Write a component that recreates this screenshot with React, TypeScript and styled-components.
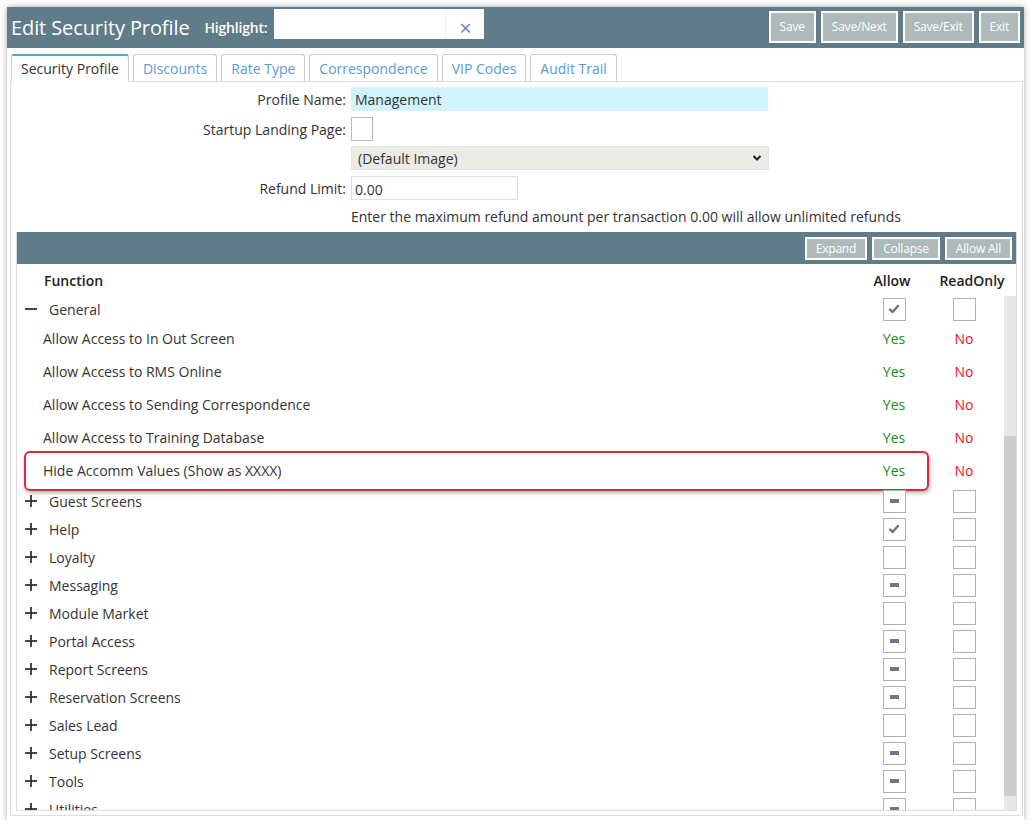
import React from 'react';
import styled, { createGlobalStyle } from 'styled-components';

const GlobalStyle = createGlobalStyle`
  html, body {
    margin: 0;
    padding: 0;
    background: #fff;
    font-family: 'Open Sans', 'Noto Sans', sans-serif;
    font-size: 14px;
    color: #333;
  }
  * { box-sizing: border-box; }
`;

type CheckState = 'check' | 'dash' | 'empty';

type SubRow = { label: string; highlight?: boolean };
type GroupRow = { label: string; allow: CheckState; readOnly: CheckState };

const subRows: SubRow[] = [
  { label: 'Allow Access to In Out Screen' },
  { label: 'Allow Access to RMS Online' },
  { label: 'Allow Access to Sending Correspondence' },
  { label: 'Allow Access to Training Database' },
  { label: 'Hide Accomm Values (Show as XXXX)', highlight: true }
];

const groups: GroupRow[] = [
  { label: 'Guest Screens', allow: 'dash', readOnly: 'empty' },
  { label: 'Help', allow: 'check', readOnly: 'empty' },
  { label: 'Loyalty', allow: 'empty', readOnly: 'empty' },
  { label: 'Messaging', allow: 'dash', readOnly: 'empty' },
  { label: 'Module Market', allow: 'empty', readOnly: 'empty' },
  { label: 'Portal Access', allow: 'dash', readOnly: 'empty' },
  { label: 'Report Screens', allow: 'dash', readOnly: 'empty' },
  { label: 'Reservation Screens', allow: 'dash', readOnly: 'empty' },
  { label: 'Sales Lead', allow: 'empty', readOnly: 'empty' },
  { label: 'Setup Screens', allow: 'dash', readOnly: 'empty' },
  { label: 'Tools', allow: 'dash', readOnly: 'empty' },
  { label: 'Utilities', allow: 'dash', readOnly: 'empty' }
];

const tabs = ['Security Profile', 'Discounts', 'Rate Type', 'Correspondence', 'VIP Codes', 'Audit Trail'];

function Box({ state }: { state: CheckState }) {
  return (
    <CheckBox>
      {state === 'check' && (
        <svg width="12" height="12" viewBox="0 0 12 12">
          <path d="M2 6.5 L4.6 9 L10 3" fill="none" stroke="#6b6e88" strokeWidth="2.4" strokeLinecap="round" strokeLinejoin="round" />
        </svg>
      )}
      {state === 'dash' && <Dash />}
    </CheckBox>
  );
}

function Toggle({ open }: { open: boolean }) {
  return (
    <ToggleIcon width="12" height="12" viewBox="0 0 12 12">
      <line x1="0" y1="6" x2="12" y2="6" stroke="#333" strokeWidth="1.8" />
      {!open && <line x1="6" y1="0" x2="6" y2="12" stroke="#333" strokeWidth="1.8" />}
    </ToggleIcon>
  );
}

export default function App() {
  return (
    <>
      <GlobalStyle />
      <Window>
        <TopBar>
          <Title>Edit Security Profile</Title>
          <HighlightLabel>Highlight:</HighlightLabel>
          <HighlightBox>
            <HighlightInput />
            <ClearX>×</ClearX>
          </HighlightBox>
          <Spacer />
          <BarButton>Save</BarButton>
          <BarButton>Save/Next</BarButton>
          <BarButton>Save/Exit</BarButton>
          <BarButton>Exit</BarButton>
        </TopBar>

        <TabStrip>
          {tabs.map((t, i) => (
            <Tab key={t} active={i === 0}>{t}</Tab>
          ))}
        </TabStrip>

        <Panel>
          <Form>
            <Label>Profile Name:</Label>
            <NameInput>Management</NameInput>
            <Label>Startup Landing Page:</Label>
            <div><EmptyCheck /></div>
            <span />
            <Select>
              <span>(Default Image)</span>
              <svg width="10" height="8" viewBox="0 0 10 8">
                <path d="M1.5 2 L5 5.5 L8.5 2" fill="none" stroke="#222" strokeWidth="2" />
              </svg>
            </Select>
            <Label>Refund Limit:</Label>
            <RefundInput>0.00</RefundInput>
            <span />
            <Help>Enter the maximum refund amount per transaction 0.00 will allow unlimited refunds</Help>
          </Form>

          <Table>
            <TableBar>
              <SmallButton>Expand</SmallButton>
              <SmallButton>Collapse</SmallButton>
              <SmallButton>Allow All</SmallButton>
            </TableBar>
            <HeadRow>
              <span>Function</span>
              <HeadCell>Allow</HeadCell>
              <HeadCell>ReadOnly</HeadCell>
            </HeadRow>
            <BodyWrap>
              <Body>
                <GroupLine compact>
                  <GroupName><Toggle open />General</GroupName>
                  <Cell><Box state="check" /></Cell>
                  <Cell><Box state="empty" /></Cell>
                </GroupLine>
                {subRows.map((r) => (
                  <SubLine key={r.label} highlight={r.highlight}>
                    <span>{r.label}</span>
                    <Cell><Yes>Yes</Yes></Cell>
                    <Cell><No>No</No></Cell>
                  </SubLine>
                ))}
                {groups.map((g) => (
                  <GroupLine key={g.label}>
                    <GroupName><Toggle open={false} />{g.label}</GroupName>
                    <Cell><Box state={g.allow} /></Cell>
                    <Cell><Box state={g.readOnly} /></Cell>
                  </GroupLine>
                ))}
              </Body>
              <Track>
                <Thumb />
              </Track>
            </BodyWrap>
          </Table>
        </Panel>
      </Window>
    </>
  );
}

const Window = styled.div`
  margin: 7px 0 0 7px;
  width: 1017px;
  height: 813px;
  background: #fff;
  box-shadow: 0 0 6px rgba(0, 0, 0, 0.35);
  display: flex;
  flex-direction: column;
`;

const TopBar = styled.div`
  height: 41px;
  background: #607c88;
  display: flex;
  align-items: center;
  padding: 0 4px 0 4px;
  gap: 5px;
`;

const Title = styled.div`
  color: #fff;
  font-size: 20px;
  margin-right: 10px;
  letter-spacing: -0.1px;
`;

const HighlightLabel = styled.div`
  color: #fff;
  font-size: 14px;
  font-weight: 600;
  letter-spacing: -0.2px;
  margin-right: 2px;
`;

const HighlightBox = styled.div`
  width: 210px;
  height: 30px;
  background: #fff;
  display: flex;
  align-items: center;
  margin-top: -7px;
`;

const HighlightInput = styled.div`
  flex: 1;
  height: 100%;
  border-right: 1px solid #eee;
`;

const ClearX = styled.span`
  width: 38px;
  text-align: center;
  color: #7186b8;
  font-size: 22px;
  line-height: 1;
  padding-top: 6px;
`;

const Spacer = styled.div`
  flex: 1;
`;

const BarButton = styled.div`
  height: 32px;
  padding: 0 9px;
  background: #aebaba;
  border: 2px solid #fff;
  color: #fff;
  font-size: 12px;
  display: flex;
  align-items: center;
  letter-spacing: -0.2px;
  margin-top: -2px;
`;

const TabStrip = styled.div`
  display: flex;
  gap: 4px;
  padding: 6px 0 0 4px;
  margin-bottom: -1px;
  position: relative;
  z-index: 1;
`;

const Tab = styled.div<{ active?: boolean }>`
  height: 28px;
  padding: 0 9px;
  display: flex;
  align-items: center;
  border: 1px solid #ccc;
  border-bottom: ${(p) => (p.active ? '1px solid #fff' : '1px solid #ddd')};
  border-top: ${(p) => (p.active ? '2px solid #42b4c4' : '1px solid #ccc')};
  border-radius: 3px 3px 0 0;
  background: #fff;
  color: ${(p) => (p.active ? '#333' : '#5b9bd6')};
  font-size: 14px;
`;

const Panel = styled.div`
  margin: 0 1px 4px 3px;
  flex: 1;
  border: 1px solid #ddd;
  display: flex;
  flex-direction: column;
  padding: 5px 5px 4px 5px;
  min-height: 0;
`;

const Form = styled.div`
  display: grid;
  grid-template-columns: 330px 1fr;
  column-gap: 5px;
  row-gap: 6px;
  align-items: center;
`;

const Label = styled.div`
  text-align: right;
  font-size: 14px;
  color: #333;
`;

const FieldText = styled.div`
  height: 24px;
  display: flex;
  align-items: center;
  padding: 0 3px;
  font-size: 14px;
  color: #333;
`;

const NameInput = styled(FieldText)`
  width: 417px;
  background: #cff4fa;
  border: 1px solid #e2eef0;
`;

const EmptyCheck = styled.div`
  width: 22px;
  height: 24px;
  border: 1px solid #b5bcbc;
`;

const Select = styled(FieldText)`
  width: 418px;
  background: #ebeae5;
  border: 1px solid #e4e3de;
  justify-content: space-between;
  padding: 0 6px 0 6px;
  margin-top: -1px;
`;

const RefundInput = styled(FieldText)`
  width: 167px;
  border: 1px solid #ddd;
  padding-top: 2px;
`;

const Help = styled.div`
  font-size: 14px;
  color: #333;
  margin-top: 1px;
`;

const Table = styled.div`
  margin-top: 6px;
  flex: 1;
  min-height: 0;
  border: 1px solid #ddd;
  border-top: none;
  display: flex;
  flex-direction: column;
`;

const TableBar = styled.div`
  height: 32px;
  background: #607c88;
  display: flex;
  justify-content: flex-end;
  align-items: center;
  gap: 5px;
  padding-right: 4px;
`;

const SmallButton = styled.div`
  height: 23px;
  padding: 0 9px;
  background: #aebaba;
  border: 2px solid #fff;
  color: #fff;
  font-size: 12px;
  display: flex;
  align-items: center;
  letter-spacing: -0.2px;
`;

const HeadRow = styled.div`
  height: 32px;
  display: grid;
  grid-template-columns: 1fr 72px 88px;
  align-items: center;
  padding-left: 27px;
  font-weight: 600;
  font-size: 14px;
  color: #222;
`;

const HeadCell = styled.span`
  text-align: center;
`;

const BodyWrap = styled.div`
  flex: 1;
  min-height: 0;
  display: flex;
  overflow: hidden;
`;

const Body = styled.div`
  flex: 1;
  overflow: hidden;
  padding-right: 5px;
`;

const Track = styled.div`
  width: 12px;
  background: #e8e8e8;
  padding-top: 140px;
  padding-bottom: 14px;
  display: flex;
`;

const Thumb = styled.div`
  flex: 1;
  background: #cdcdcd;
`;

const Line = styled.div`
  display: grid;
  grid-template-columns: 1fr 70px 70px;
  align-items: center;
  font-size: 14px;
  color: #333;
  position: relative;
`;

const GroupLine = styled(Line)<{ compact?: boolean }>`
  height: ${(p) => (p.compact ? '26px' : '28px')};
`;

const SubLine = styled(Line)<{ highlight?: boolean }>`
  height: 33px;
  padding-left: 26px;

  ${(p) =>
    p.highlight &&
    `
    &::after {
      content: '';
      position: absolute;
      left: 7px;
      right: 70px;
      top: -3px;
      bottom: -4px;
      border: 2.5px solid #dc2a3c;
      border-radius: 6px;
      box-shadow: 1px 2px 4px rgba(0, 0, 0, 0.3);
      pointer-events: none;
    }
  `}
`;

const GroupName = styled.div`
  display: flex;
  align-items: center;
  padding-left: 8px;
`;

const ToggleIcon = styled.svg`
  margin-right: 12px;
`;

const Cell = styled.div`
  display: flex;
  justify-content: center;
`;

const CheckBox = styled.div`
  width: 23px;
  height: 23px;
  border: 1px solid #aab6b6;
  background: #fff;
  display: flex;
  align-items: center;
  justify-content: center;
`;

const Dash = styled.div`
  width: 9px;
  height: 4px;
  background: #6f7590;
`;

const Yes = styled.span`
  color: #208a20;
`;

const No = styled.span`
  color: #e8142e;
`;
